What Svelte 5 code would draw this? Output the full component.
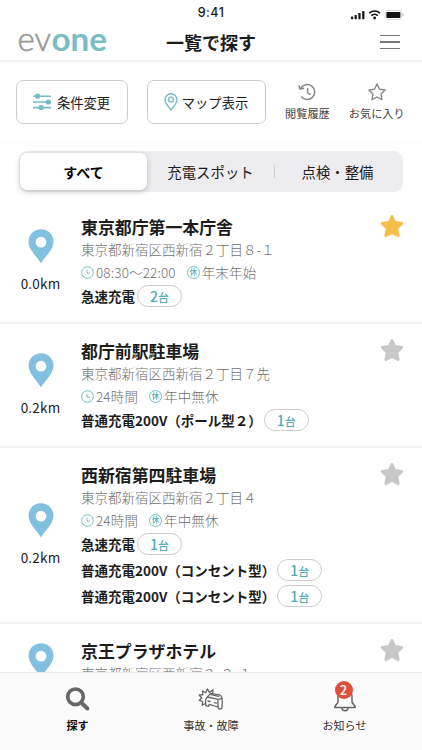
<script>
	const tabs = ['すべて', '充電スポット', '点検・整備'];
	let activeTab = 0;

	let spots = [
		{
			name: '東京都庁第一本庁舎',
			address: '東京都新宿区西新宿２丁目８-１',
			distance: '0.0km',
			hours: '08:30〜22:00',
			holiday: '年末年始',
			favorite: true,
			chargers: [{ label: '急速充電', count: 2 }]
		},
		{
			name: '都庁前駅駐車場',
			address: '東京都新宿区西新宿２丁目７先',
			distance: '0.2km',
			hours: '24時間',
			holiday: '年中無休',
			favorite: false,
			chargers: [{ label: '普通充電200V（ポール型２）', count: 1 }]
		},
		{
			name: '西新宿第四駐車場',
			address: '東京都新宿区西新宿２丁目４',
			distance: '0.2km',
			hours: '24時間',
			holiday: '年中無休',
			favorite: false,
			chargers: [
				{ label: '急速充電', count: 1 },
				{ label: '普通充電200V（コンセント型）', count: 1 },
				{ label: '普通充電200V（コンセント型）', count: 1 }
			]
		},
		{
			name: '京王プラザホテル',
			address: '東京都新宿区西新宿２-２-１',
			favorite: false,
			chargers: []
		}
	];

	const toggleFavorite = (i) => {
		spots[i].favorite = !spots[i].favorite;
	};
</script>

<div class="app">
	<div class="status">
		<span class="status__time">9:41</span>
		<svg class="status__icons" width="54" height="12" viewBox="0 0 54 12">
			<g fill="#111">
				<rect x="0" y="7.4" width="2.2" height="2.8" rx=".6" />
				<rect x="3.6" y="6" width="2.2" height="4.2" rx=".6" />
				<rect x="7.4" y="4" width="2.2" height="6.2" rx=".6" />
				<rect x="11.2" y="2" width="2.2" height="8.2" rx=".6" />
				<rect x="35.4" y="3" width="14" height="6" rx="1" />
				<circle cx="23.6" cy="9" r="1.4" />
			</g>
			<g fill="none" stroke="#111" stroke-width="1.6">
				<path d="M18.2 4.3a7.6 7.6 0 0 1 10.8 0" />
				<path d="M20.4 6.7a4.6 4.6 0 0 1 6.4 0" />
			</g>
			<rect x="34.2" y="1.6" width="16.4" height="8.8" rx="2.2" fill="none" stroke="#ccc" stroke-width=".7" />
			<path d="M51.8 4.6v2.8" stroke="#bbb" />
		</svg>
	</div>

	<header class="header">
		<svg class="logo" width="90" height="26" viewBox="0 0 90 26">
			<text class="logo__ev" x="-.5" y="21" textLength="33.5" lengthAdjust="spacingAndGlyphs">ev</text>
			<text class="logo__one" x="33.5" y="21" textLength="55.5" lengthAdjust="spacingAndGlyphs">one</text>
		</svg>
		<h1>一覧で探す</h1>
		<button class="menu" aria-label="メニュー"><i></i><i></i><i></i></button>
	</header>

	<div class="actions">
		<button class="action action--filter">
			<svg width="20" height="18" viewBox="0 0 20 18" stroke="#76bcc2" stroke-width="1.6" fill="#76bcc2">
				<path d="M1 3.2h18M1 9h18M1 14.6h18" />
				<circle cx="5.6" cy="3.2" r="1.8" />
				<circle cx="16.4" cy="9" r="1.8" />
				<circle cx="9" cy="14.6" r="1.8" />
			</svg>
			条件変更
		</button>
		<button class="action action--map">
			<svg width="14" height="18" viewBox="0 0 14 18" fill="none" stroke="#76bcc2" stroke-width="1.4">
				<path d="M7 17C3.4 12.4 1 9.8 1 6.7a6 6 0 0 1 12 0C13 9.8 10.6 12.4 7 17z" />
				<circle cx="7" cy="6.6" r="2.5" />
			</svg>
			マップ表示
		</button>
		<button class="shortcut shortcut--history">
			<svg width="20" height="20" viewBox="0 0 20 20" fill="none" stroke="#888" stroke-width="1.5">
				<path d="M3.7 6.3a7.5 7.5 0 1 1 .5 8.2" />
				<path d="M1.8 3.2l1.3 3.9 4-.8" />
				<path d="M10.6 6v4.8l2.7 1.9" />
			</svg>
			閲覧履歴
		</button>
		<button class="shortcut shortcut--favorite">
			<svg width="20" height="20" viewBox="0 0 20 20" fill="none" stroke="#888" stroke-width="1.4" stroke-linejoin="round">
				<path d="M10 2l2.5 5.2 5.6.8-4.1 4 1 5.7-5-2.7-5 2.7 1-5.7-4.1-4 5.6-.8z" />
			</svg>
			お気に入り
		</button>
	</div>

	<div class="tabs">
		{#each tabs as tab, i}
			<button class="tab" class:tab--active={activeTab === i} on:click={() => (activeTab = i)}>
				{tab}
			</button>
		{/each}
	</div>

	<ul class="spots">
		{#each spots as spot, i}
			<li class="spot">
				<div class="spot__place">
					<svg width="26" height="35" viewBox="0 0 26 35">
						<path
							fill="#82c0e2"
							fill-rule="evenodd"
							d="M13 .3C6 .3.5 5.8.5 12.7.5 21 10 28.5 13 34.5 16 28.5 25.5 21 25.5 12.7 25.5 5.8 20 .3 13 .3zm0 7.5a5.4 5.4 0 1 1 0 10.8 5.4 5.4 0 0 1 0-10.8z"
						/>
					</svg>
					<span class="spot__distance">{spot.distance ?? ''}</span>
				</div>
				<div class="spot__body">
					<h2>{spot.name}</h2>
					<p class="spot__address">{spot.address}</p>
					{#if spot.hours}
						<p class="spot__hours">
							<svg width="13" height="13" viewBox="0 0 13 13" fill="none" stroke="#6fbfc3">
								<circle cx="6.5" cy="6.5" r="5.8" />
								<path d="M6 3.8v3.4h3" />
							</svg>
							<span>{spot.hours}</span>
							<i class="holiday">休</i>
							<span>{spot.holiday}</span>
						</p>
					{/if}
					{#each spot.chargers as charger}
						<p class="charger">
							{charger.label}
							<span class="count">{charger.count}<small>台</small></span>
						</p>
					{/each}
				</div>
				<button
					class="star"
					class:star--on={spot.favorite}
					aria-label="お気に入り"
					on:click={() => toggleFavorite(i)}
				>
					<svg width="24" height="24" viewBox="0 0 24 24">
						<path
							fill="currentColor"
							stroke="currentColor"
							stroke-width="3"
							stroke-linejoin="round"
							d="M12 2.5l2.7 6.1 7.1.8-5.2 4.7 1.5 7.4-6.1-3.2-6.1 3.2 1.5-7.4L2.2 9.4l7.1-.8z"
						/>
					</svg>
				</button>
			</li>
		{/each}
	</ul>

	<nav class="nav">
		<a class="nav__item nav__item--active" href="#search">
			<svg width="26" height="26" viewBox="0 0 26 26" fill="none" stroke="#666">
				<circle cx="10.5" cy="10.8" r="7.8" stroke-width="3.6" />
				<path d="M16.6 17l5.8 5.5" stroke-width="4" stroke-linecap="round" />
			</svg>
			探す
		</a>
		<a class="nav__item" href="#accident">
			<svg width="26" height="26" viewBox="0 0 26 26" fill="none" stroke="#666" stroke-width="1.3" stroke-linejoin="round" stroke-linecap="round">
				<path d="M7.5 17.5l-3.3 1.7.5-3.700-3.400-1.200 2.500-2.300L1.200 9l3.600-.2L4.500 5l3.200 1.800 1.700-4 2.100 3.600 3.500-2.600-.4 3.400" />
				<path d="M9.500 10.800l3-3.500 8.700 1.500c1.700.3 2.400 1.500 2.600 3.200l.6 4.600-.7 6-2.800.5-.8-2.100-8.900-2.700-.7 2-2.700-.7-.3-5.700z" />
				<path d="M9.500 11l10.300 2.300 4.200-.7M12.900 8.600l7.800 1.700M19.800 13.300l.3 7.500" />
				<path d="M10 15l2 .5M16.500 16.700l1.900.5" />
			</svg>
			事故・故障
		</a>
		<a class="nav__item" href="#news">
			<svg width="26" height="26" viewBox="0 0 26 26" fill="none" stroke="#666" stroke-width="1.5" stroke-linejoin="round">
				<path d="M13 3C8.500 3 6 6.400 6 10.300v5.500c0 2-3.300 3.300-3.300 5.700h20.600c0-2.400-3.300-3.700-3.300-5.700v-5.500C20 6.400 17.500 3 13 3z" />
				<path d="M10 21.800a3 3 0 0 0 6 0" />
			</svg>
			<b class="badge">2</b>
			お知らせ
		</a>
	</nav>
</div>

<style>
	:global(body) {
		background: #fff;
	}

	.app {
		display: flex;
		flex-direction: column;
		width: 422px;
		height: 750px;
		overflow: hidden;
		background: #fff;
		color: #1c1c1c;
		font-family: 'Noto Sans CJK JP', sans-serif;
	}

	button {
		padding: 0;
		border: none;
		background: none;
		color: inherit;
		font-family: inherit;
	}

	h1,
	h2,
	p,
	ul {
		margin: 0;
		padding: 0;
	}

	svg {
		display: block;
		flex: none;
	}

	/* status bar */
	.status {
		display: grid;
		grid-template-columns: 1fr auto 1fr;
		height: 24px;
		flex: none;
	}

	.status__time {
		grid-column: 2;
		padding-top: 5px;
		font: 500 12.5px/16px Inter, sans-serif;
		letter-spacing: 0.5px;
	}

	.status__icons {
		justify-self: end;
		margin: 9px 17px 0 0;
	}

	/* header */
	.header {
		display: grid;
		grid-template-columns: 1fr auto 1fr;
		align-items: center;
		height: 36px;
		flex: none;
		padding: 0 22px 0 18px;
		border-bottom: 2px solid #f3f3f3;
	}

	.logo {
		margin-top: 2px;
		overflow: visible;
		font-family: Lato, sans-serif;
		font-size: 33px;
	}

	.logo__ev {
		fill: #999;
		font-weight: 300;
		stroke: #999;
		stroke-width: 0.6px;
	}

	.logo__one {
		fill: #79bec5;
		font-weight: 700;
	}

	.header h1 {
		padding-left: 4px;
		font-size: 18px;
		line-height: 36px;
		font-weight: 700;
	}

	.menu {
		display: flex;
		flex-direction: column;
		gap: 5px;
		justify-self: end;
	}

	.menu i {
		width: 20px;
		height: 1.5px;
		background: #777;
	}

	/* actions */
	.actions {
		display: flex;
		align-items: flex-start;
		height: 62px;
		flex: none;
		padding: 18px 0 0 16px;
		border-bottom: 1px solid #fafafa;
	}

	.action {
		display: flex;
		align-items: center;
		justify-content: center;
		box-sizing: border-box;
		height: 44px;
		border: 1px solid #ccc;
		border-radius: 7px;
		font-size: 13.3px;
	}

	.action--filter {
		width: 112px;
		margin-right: 19px;
		padding-right: 2px;
		gap: 5px;
	}

	.action--map {
		width: 119px;
		padding-right: 1px;
		gap: 4px;
	}

	.shortcut {
		display: flex;
		flex-direction: column;
		align-items: center;
		margin: 2px 0 0 19px;
		color: #444;
		font-size: 11.2px;
		line-height: 18px;
		gap: 2px;
	}

	/* tabs */
	.tabs {
		display: grid;
		grid-template-columns: 128px 127px 1fr;
		flex: none;
		height: 41px;
		margin: 8px 19px 0 19px;
		border-radius: 9px;
		background: #ededef;
	}

	.tab {
		position: relative;
		font-size: 14.4px;
	}

	.tab:last-child {
		padding-right: 2px;
	}

	.tab:last-child::before {
		content: '';
		position: absolute;
		left: 0;
		top: 14px;
		height: 13px;
		border-left: 1px solid #d0d0d3;
	}

	.tab--active {
		margin: 2px 0 2px 1px;
		border-radius: 7px;
		background: #fff;
		box-shadow: 0 2px 6px rgba(0, 0, 0, 0.2);
		color: #000;
		font-weight: 700;
		font-size: 14px;
	}

	/* list */
	.spots {
		flex: 1;
		min-height: 0;
		margin-top: 8px;
		overflow: hidden;
		list-style: none;
	}

	.spot {
		display: grid;
		grid-template-columns: 81px 1fr 60px;
		box-sizing: border-box;
		min-height: 104px;
		border-bottom: 2px solid #f2f2f2;
	}

	.spot__place {
		display: flex;
		flex-direction: column;
		align-items: center;
		align-self: center;
		font-size: 13.5px;
		line-height: 20px;
		letter-spacing: 0.2px;
		gap: 9px;
	}

	.spot__distance {
		height: 20px;
	}

	.spot__body {
		padding: 14px 0 13px;
		white-space: nowrap;
	}

	.spot h2 {
		font-size: 16.9px;
		line-height: 25px;
		font-weight: 700;
	}

	.spot__address {
		color: #707070;
		font-size: 13.5px;
		font-weight: 300;
		line-height: 20px;
	}

	.spot__hours {
		display: flex;
		align-items: center;
		height: 22px;
		padding-top: 2px;
		color: #707070;
		font-size: 13.5px;
		font-weight: 300;
		letter-spacing: 0.15px;
	}

	.spot__hours svg {
		margin-right: 2px;
	}

	.holiday {
		box-sizing: border-box;
		width: 13px;
		height: 13px;
		margin: 0 2px 0 11px;
		border: 1px solid #6fbfc3;
		border-radius: 50%;
		color: #4fa9b0;
		font-size: 7.5px;
		font-style: normal;
		font-weight: 500;
		line-height: 10px;
		letter-spacing: 0;
		text-align: center;
	}

	.charger {
		display: flex;
		align-items: center;
		height: 26px;
		font-size: 13.5px;
		font-weight: 700;
	}

	.count {
		box-sizing: border-box;
		width: 45px;
		height: 22px;
		margin-left: 2px;
		border: 1px solid #ccc;
		border-radius: 11px;
		color: #53abb5;
		font-size: 14px;
		font-weight: 500;
		line-height: 20px;
		text-align: center;
	}

	.count small {
		font-size: 11px;
	}

	.star {
		align-self: start;
		margin: 14px 0 0 18px;
		color: #c8c8c8;
	}

	.star--on {
		color: #f5bf4a;
	}

	/* bottom navigation */
	.nav {
		display: grid;
		grid-template-columns: repeat(3, 133.5px);
		justify-content: center;
		flex: none;
		box-sizing: border-box;
		height: 78px;
		border-top: 1px solid #e8e8e8;
		background: #fafafa;
	}

	.nav__item {
		position: relative;
		display: flex;
		flex-direction: column;
		align-items: center;
		padding-top: 13px;
		color: #333;
		font-size: 11px;
		line-height: 16px;
		text-decoration: none;
		gap: 5px;
	}

	.nav__item--active {
		color: #111;
		font-weight: 700;
	}

	.badge {
		position: absolute;
		top: 8px;
		left: calc(50% - 10px);
		width: 18px;
		height: 18px;
		border-radius: 50%;
		background: #dc4f38;
		color: #fff;
		font-size: 13px;
		font-weight: 500;
		line-height: 18px;
		text-align: center;
	}
</style>
